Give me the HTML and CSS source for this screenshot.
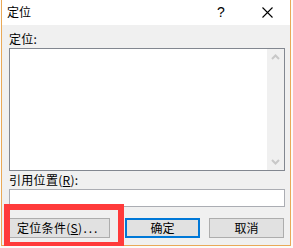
FILE: index.html
```html
<!DOCTYPE html>
<html>
<head>
  <title>定位</title>
  <meta charset="UTF-8">
  <link rel="stylesheet" href="styles.css">
</head>
<body>
  <div class="dialog">
    <div class="titlebar">
      <span class="title">定位</span>
      <span class="help">?</span>
      <span class="close">
        <svg width="11" height="11" viewBox="0 0 11 11"><path d="M0.5 0.5 L10.5 10.5 M10.5 0.5 L0.5 10.5" stroke="#000" stroke-width="1.1" fill="none"/></svg>
      </span>
    </div>
    <div class="content">
      <div class="label label-top">定位:</div>
      <div class="listbox">
        <div class="list-items"></div>
        <div class="scrollbar">
          <svg width="17" height="17" viewBox="0 0 17 17"><path d="M5 10 L8.5 6.5 L12 10" stroke="#c8c8c8" stroke-width="2" fill="none"/></svg>
          <svg width="17" height="17" viewBox="0 0 17 17"><path d="M5 7 L8.5 10.5 L12 7" stroke="#c8c8c8" stroke-width="2" fill="none"/></svg>
        </div>
      </div>
      <div class="label">引用位置(<u>R</u>):</div>
      <div class="textbox"></div>
      <div class="buttons">
        <button class="btn btn-special">定位条件(<u>S</u>)<span class="dots">...</span></button>
        <button class="btn btn-default">确定</button>
        <button class="btn">取消</button>
      </div>
    </div>
    <div class="highlight"></div>
  </div>
</body>
</html>
```

FILE: styles.css
```css
body { margin: 0; background: #fbfbfb; font-family: "Noto Sans CJK SC", "Microsoft YaHei", sans-serif; font-size: 12px; color: #000; }
.dialog { position: relative; margin-left: 1px; width: 288px; height: 245px; border: 1px solid #e9a957; border-top: none; background: #f0f0f0; }
.titlebar { height: 25px; background: #fff; display: flex; align-items: center; }
.title { padding-left: 5px; flex: 1; line-height: 25px; margin-top: -2px; }
.help { font-family: "Liberation Sans", sans-serif; font-size: 14px; width: 8px; margin-right: 37px; margin-top: -1px; }
.close { width: 11px; height: 11px; margin-right: 17px; margin-top: -1px; display: flex; }
.content { padding: 0 5px 0 7px; }
.label { line-height: 18px; height: 18px; letter-spacing: 0.3px; }
.label-top { margin-top: 5px; }
.listbox { height: 121px; border: 1px solid #828790; background: #fff; display: flex; }
.list-items { flex: 1; }
.scrollbar { width: 17px; background: #f0f0f0; display: flex; flex-direction: column; justify-content: space-between; }
.scrollbar svg { display: block; }
.textbox { height: 16px; border: 1px solid #abadb3; background: #fff; }
.buttons { display: flex; margin-top: 11px; }
.btn { font-family: inherit; font-size: 12px; height: 20px; padding: 0; background: #e1e1e1; border: 1px solid #adadad; color: #000; line-height: 16px; }
.btn-special { width: 101px; margin-right: 15px; text-align: left; padding-left: 7px; letter-spacing: 0.3px; }
.dots { letter-spacing: 2px; margin-left: 1px; }
.btn-default { width: 75px; border: 2px solid #0078d7; margin-right: 9px; }
.btn + .btn:last-child { width: 75px; }
.highlight { position: absolute; left: 2px; top: 204px; width: 108px; height: 32px; border: 6px solid #ff3b3b; }
```
